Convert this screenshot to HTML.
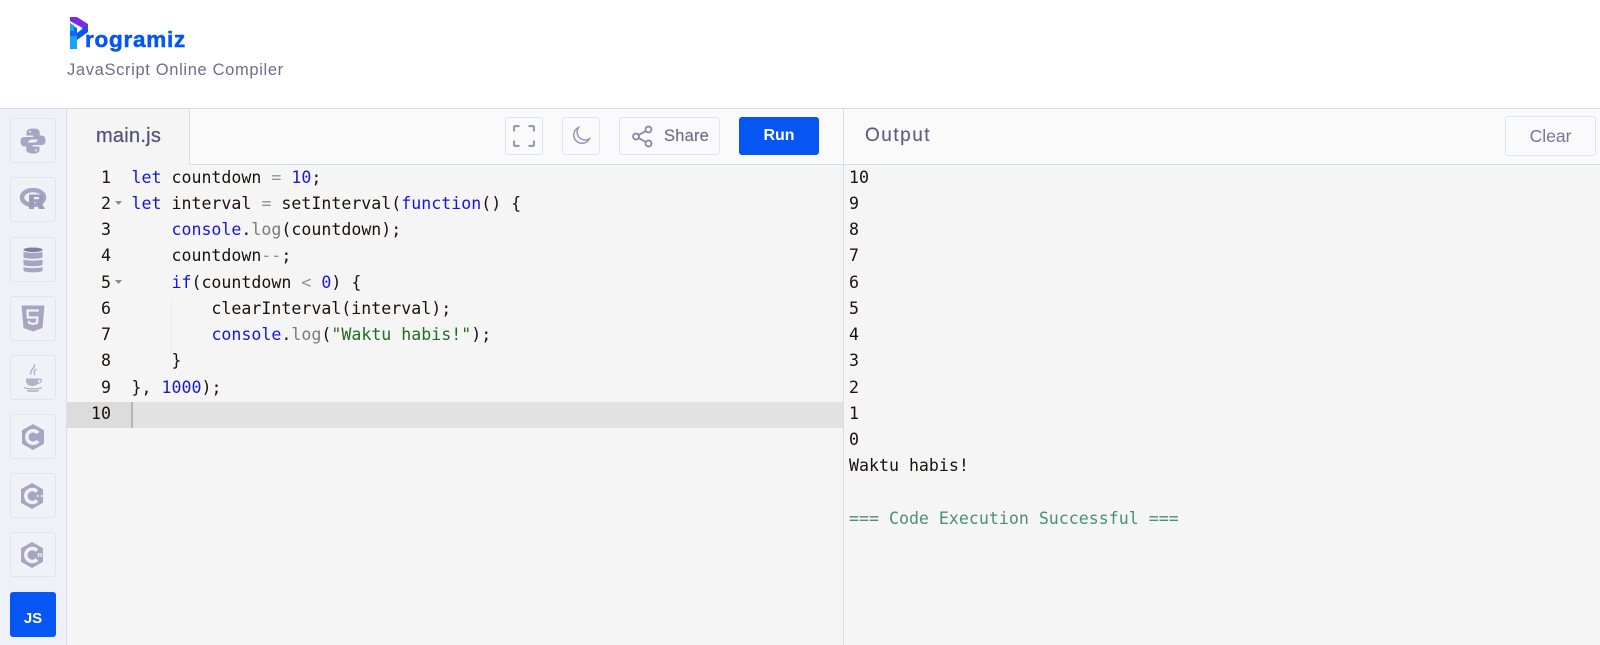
<!DOCTYPE html>
<html lang="en">
<head>
<meta charset="utf-8">
<title>JavaScript Online Compiler</title>
<style>
*{box-sizing:border-box}
html,body{margin:0;padding:0;width:1600px;height:645px;overflow:hidden;background:#fff;font-family:"Liberation Sans",sans-serif}
.abs{position:absolute}
#root{position:relative;width:1600px;height:645px;overflow:hidden}
.logo{left:85px;top:23px;font-size:22.5px;font-weight:bold;color:#0556f3;line-height:34px;letter-spacing:.75px;-webkit-text-stroke:.5px #0556f3;white-space:nowrap}
.sub{left:67px;top:60px;font-size:16.5px;line-height:20px;color:#6f6d8c;letter-spacing:.65px;white-space:nowrap}
.top{left:66px;top:108px;width:1534px;height:57px;background:#fafafa;border-top:1px solid #d5deea;border-bottom:1px solid #d5deea}
.side{left:0;top:108px;width:67px;height:537px;background:#eef1f7;border-top:1px solid #d5deea;border-right:1px solid #d5deea}
.sb{left:10px;width:46px;height:45px;border:1px solid #e0e5ef;border-radius:3px;background:#f0f2f8;display:flex;align-items:center;justify-content:center}
.tab{left:67px;top:108px;width:123px;height:57px;background:#f5f5f5;border-right:1px solid #d5deea;border-top:1px solid #d5deea;font-size:20px;color:#55527a;padding-left:29px;line-height:54px;letter-spacing:.25px;-webkit-text-stroke:.25px #55527a}
.btn{top:117px;height:38px;border:1px solid #dfe4ee;border-radius:3px;background:#fafafa;display:flex;align-items:center;justify-content:center;color:#6f6d8c}
.ed{left:67px;top:165px;width:776px;height:480px;background:#f5f5f5}
.out{left:843px;top:165px;width:757px;height:480px;background:#f5f5f5;border-left:1px solid #d5deea}
.code{font-family:"DejaVu Sans Mono",monospace;font-size:16.6px;line-height:26.25px;white-space:pre;color:#1c1010}
.ln{left:67px;width:44px;text-align:right;font-family:"DejaVu Sans Mono",monospace;font-size:16.6px;line-height:26.25px;color:#1c1010}
.k{color:#1414e6}.n{color:#1a1ad0}.o{color:#8a93a0}.s{color:#1f6f1f}.g{color:#7a7a7a}
</style>
</head>
<body>
<div id="root">

<svg class="abs" style="left:70px;top:17px" width="19" height="32" viewBox="0 0 19 32">
  <path d="M0 0 L7 0 L18 7 L18 14 L0 4 Z" fill="#7a2be8"/>
  <path d="M18 12 L18 15 L7 23 L7 16 L11 13 L14 10 Z" fill="#0556f3"/>
  <path d="M0 7 L7 11 L7 32 L0 32 Z" fill="#0a6af5"/>
  <path d="M0 19 L7 19 L7 32 L0 32 Z" fill="#16a3f5"/>
  <path d="M0 6 L4 8.500 L4 14 L0 14 Z" fill="#16a3f5"/>
</svg>
<div class="abs logo">rogramiz</div>
<div class="abs sub">JavaScript Online Compiler</div>

<div class="abs top"></div>
<div class="abs side"></div>

<div class="abs sb" style="top:118px">
<svg width="26" height="26" viewBox="0 0 26 26" fill="#a6a6c2"><path d="M13 0.500c-5 0-6.500 2-6.500 3.800V7.500h6.800V9H4.500C2 9 0.500 10.500 0.500 13.300c0 3.300 1.500 5.200 4 5.200H8v-3.300c0-2 1.800-3.700 3.800-3.700h4.700c1.800 0 3.200-1.400 3.200-3.200V4.300C19.700 2.300 18 0.500 13 0.500zM10 2.800a1 1 0 110 2 1 1 0 010-2z"/><path d="M13 25.500c5 0 6.500-2 6.500-3.800V18.500h-6.800V17h8.800c2.500 0 4-1.500 4-4.300 0-3.300-1.500-5.200-4-5.200H18v3.300c0 2-1.800 3.700-3.800 3.700H9.500c-1.800 0-3.200 1.400-3.200 3.200v4c0 2 1.700 3.800 6.700 3.800zM16 23.200a1 1 0 110-2 1 1 0 010 2z"/></svg>
</div>
<div class="abs sb" style="top:177px">
<svg width="28" height="24" viewBox="0 0 28 24"><ellipse cx="14" cy="9.500" rx="11" ry="7.500" fill="none" stroke="#a6a6c2" stroke-width="4.500"/><path d="M10 6.500h9.500c3.500 0 4.700 1.500 4.700 3.500 0 1.800-1 2.900-2.500 3.400L26 21h-6l-3.500-7H15v7h-5z" fill="#9c9cbc"/><path d="M15 9h4c1.700 0 1.700 2.300 0 2.300h-4z" fill="#f0f2f8"/></svg>
</div>
<div class="abs sb" style="top:237px">
<svg width="20" height="26" viewBox="0 0 20 26" fill="#a6a6c2"><ellipse cx="10" cy="2.800" rx="9.500" ry="2.300" fill="#7f7fa6"/><path d="M0.500 4.500c2 1.800 17 1.800 19 0v5.800c-2 2-17 2-19 0zM0.500 12.300c2 1.800 17 1.800 19 0v5.500c-2 2-17 2-19 0zM0.500 19.800c2 1.800 17 1.800 19 0V23.500c0 2.500-19 2.500-19 0z"/></svg>
</div>
<div class="abs sb" style="top:296px">
<svg width="24" height="27" viewBox="0 0 24 27"><path d="M0.500 0.500h23L21.500 23 12 26.500 2.500 23z" fill="#a6a6c2"/><path d="M18 5.500H6.500l.4 7h9.500l-.4 5.300L12 19l-4-1.200-.2-2" fill="none" stroke="#f0f2f8" stroke-width="2.200"/></svg>
</div>
<div class="abs sb" style="top:355px">
<svg width="22" height="30" viewBox="0 0 22 30" fill="none" stroke="#a6a6c2"><path d="M12 1c2 4-5 6-3 10.500M14.500 6c-3 2-3 4-1.500 6" stroke-width="1.200"/><path d="M4 15.500h12.500v2c0 3.500-2 5.500-6.200 5.500S4 21 4 17.500z" fill="#b2b2ca" stroke="none"/><path d="M16.500 16c4-.5 4 3.500-1 4.500" stroke-width="1"/><path d="M2 24.500c4 1.800 14 1.800 18 0M5 27.500c3 .8 9 .8 12 0" stroke-width="1.200"/></svg>
</div>
<div class="abs sb" style="top:414px">
<svg width="24" height="28" viewBox="0 0 24 28"><path d="M12 1l11 6.300v13.400L12 27 1 20.700V7.300z" fill="#a6a6c2"/><path d="M17 10a6.300 6.300 0 100 8" fill="none" stroke="#f0f2f8" stroke-width="3.500"/></svg>
</div>
<div class="abs sb" style="top:473px">
<svg width="26" height="28" viewBox="0 0 26 28"><path d="M12 1l11 6.300v13.400L12 27 1 20.700V7.300z" fill="#a6a6c2"/><path d="M17 9.500a6.500 6.500 0 100 9" fill="none" stroke="#f0f2f8" stroke-width="3.500"/><path d="M16.500 14h2.500M17.700 12.800v2.500M20.500 14h2.500M21.700 12.800v2.500" stroke="#f0f2f8" stroke-width=".8"/></svg>
</div>
<div class="abs sb" style="top:532px">
<svg width="26" height="28" viewBox="0 0 26 28"><path d="M12 1l11 6.300v13.400L12 27 1 20.700V7.300z" fill="#a6a6c2"/><path d="M17 9.500a6.500 6.500 0 100 9" fill="none" stroke="#f0f2f8" stroke-width="3.500"/><path d="M18.500 12v4M21 12v4M17.500 13h5M17.500 15h5" stroke="#f0f2f8" stroke-width=".8"/></svg>
</div>
<div class="abs sb" style="top:592px;background:#0556f3;border-color:#0556f3;color:#fff;font-weight:bold;font-size:15px;padding-top:8px">JS</div>

<div class="abs tab">main.js</div>

<div class="abs btn" style="left:505px;width:38px">
<svg width="22" height="22" viewBox="0 0 22 22" fill="none" stroke="#9a98b4" stroke-width="2.200"><path d="M1 6.500V2.500Q1 1 2.500 1H6.500M15.500 1H19.500Q21 1 21 2.500V6.500M21 15.500V19.500Q21 21 19.500 21H15.500M6.500 21H2.500Q1 21 1 19.500V15.500"/></svg>
</div>
<div class="abs btn" style="left:562px;width:38px">
<svg width="20" height="20" viewBox="0 0 20 20" fill="none" stroke="#9a98b4" stroke-width="1.500"><path d="M7.500 1.500A8.300 8.300 0 1018.500 12.700 8 8 0 017.500 1.500Z"/></svg>
</div>
<div class="abs btn" style="left:619px;width:101px;justify-content:flex-start;padding-left:12px;font-size:16.5px;letter-spacing:.2px;-webkit-text-stroke:.15px #6f6d8c">
<svg width="21" height="23" viewBox="0 0 21 23" fill="none" stroke="#86849f" stroke-width="1.700" style="margin-right:11px"><circle cx="16.500" cy="4.500" r="3"/><circle cx="4" cy="11.500" r="3"/><circle cx="16.500" cy="18.500" r="3"/><path d="M6.700 10L13.800 6M6.700 13L13.800 17"/></svg>
Share</div>
<div class="abs btn" style="left:739px;width:80px;background:#0556f3;border-color:#0556f3;color:#fff;font-weight:bold;font-size:16px">Run</div>

<div class="abs" style="left:843px;top:108px;width:1px;height:57px;background:#d5deea"></div>
<div class="abs" style="left:865px;top:124px;font-size:19px;line-height:24px;color:#5f5d80;letter-spacing:1.5px;-webkit-text-stroke:.15px #5f5d80">Output</div>
<div class="abs btn" style="left:1505px;top:116px;width:91px;height:40px;font-size:17.5px;color:#77759a">Clear</div>

<div class="abs ed"></div>
<div class="abs out"></div>

<div class="abs" style="left:67px;top:402px;width:776px;height:26px;background:#e2e2e2"></div>
<div class="abs" style="left:67px;top:402px;width:64px;height:26px;background:#dcdcdc"></div>
<div class="abs" style="left:131px;top:402px;width:1.500px;height:26px;background:#b5b5b5"></div>
<div class="abs" style="left:171px;top:299px;width:0;height:52px;border-left:1px dotted #e2e2e2"></div>

<div class="abs ln" style="top:164.500px">1<br>2<br>3<br>4<br>5<br>6<br>7<br>8<br>9<br>10</div>
<svg class="abs" style="left:115px;top:201px" width="8" height="5"><path d="M0 0h7L3.500 4z" fill="#8a8a8a"/></svg>
<svg class="abs" style="left:115px;top:280px" width="8" height="5"><path d="M0 0h7L3.500 4z" fill="#8a8a8a"/></svg>

<div class="abs code" style="left:131.500px;top:164.500px"><span class="k">let</span> countdown <span class="o">=</span> <span class="n">10</span>;
<span class="k">let</span> interval <span class="o">=</span> setInterval(<span class="k">function</span>() {
    <span class="k">console</span>.<span class="g">log</span>(countdown);
    countdown<span class="o">--</span>;
    <span class="k">if</span>(countdown <span class="o">&lt;</span> <span class="n">0</span>) {
        clearInterval(interval);
        <span class="k">console</span>.<span class="g">log</span>(<span class="s">"Waktu habis!"</span>);
    }
}, <span class="n">1000</span>);
</div>

<div class="abs code" style="left:849px;top:164.500px">10
9
8
7
6
5
4
3
2
1
0
Waktu habis!

<span style="color:#4a8f78">=== Code Execution Successful ===</span></div>

</div>
</body>
</html>
